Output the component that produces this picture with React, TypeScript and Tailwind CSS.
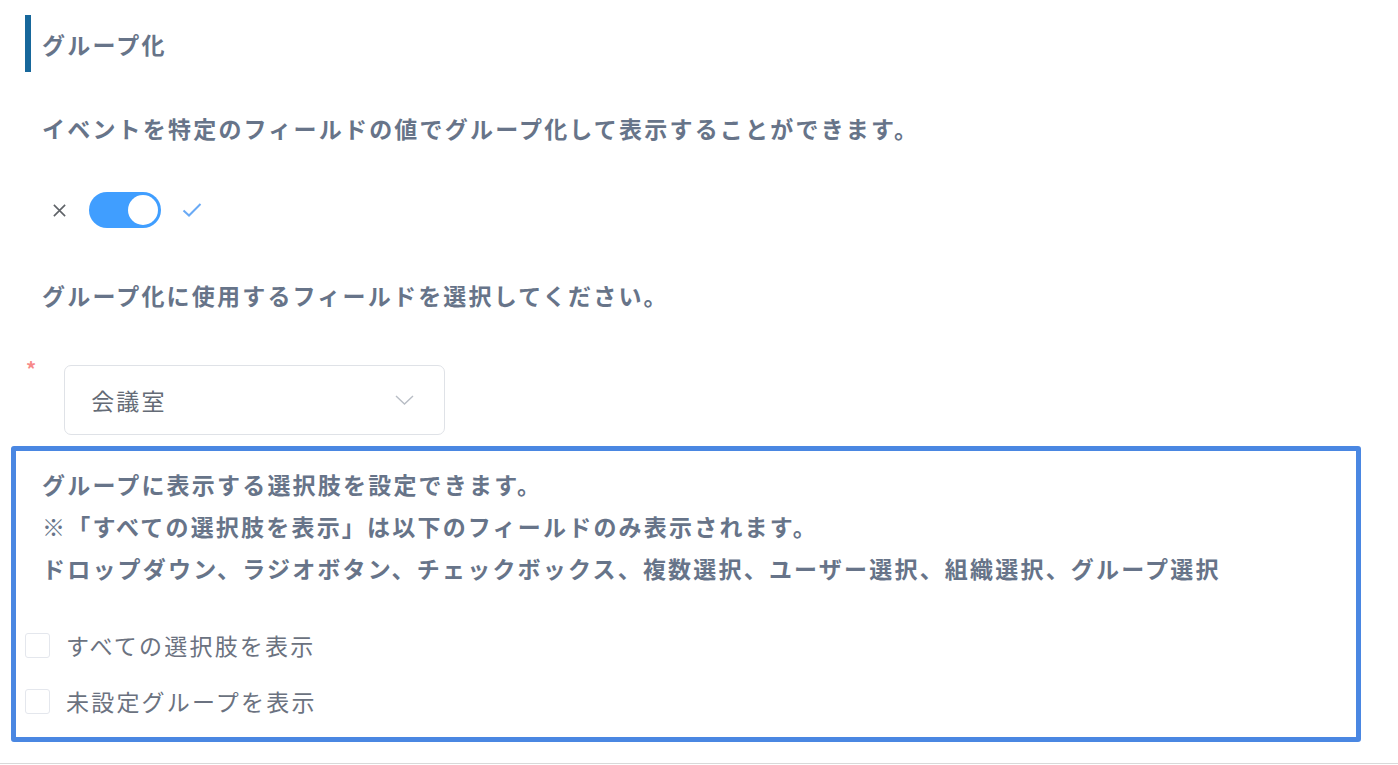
import { useState } from 'react';

const font = { fontFamily: '"Noto Sans CJK JP", "Noto Sans", sans-serif' };

function Toggle({ on, onChange }: { on: boolean; onChange: (v: boolean) => void }) {
  return (
    <div className="flex items-center h-[36px]">
      <svg className="ml-[52px] w-[15px] h-[15px]" viewBox="0 0 16 16" fill="none" stroke="#5f6368" strokeWidth={1.7}>
        <path d="M2 2l12 12M14 2L2 14" />
      </svg>
      <button
        onClick={() => onChange(!on)}
        className={`ml-[22px] relative w-[72px] h-[36px] rounded-full ${on ? 'bg-[#409eff]' : 'bg-[#dcdfe6]'}`}
      >
        <span
          className={`absolute top-[3px] w-[30px] h-[30px] rounded-full bg-white ${on ? 'left-[39px]' : 'left-[3px]'}`}
        />
      </button>
      <svg className="ml-[21px] w-[20px] h-[16px]" viewBox="0 0 20 16" fill="none" stroke="#6aaaf5" strokeWidth={2}>
        <path d="M1.5 8.5l5.5 5L18.5 2" />
      </svg>
    </div>
  );
}

function Check({ label }: { label: string }) {
  const [checked, setChecked] = useState(false);
  return (
    <label className="flex items-center h-[56px] cursor-pointer">
      <span
        onClick={() => setChecked(!checked)}
        className={`w-[25px] h-[25px] rounded-[3px] border ${checked ? 'bg-[#409eff] border-[#409eff]' : 'bg-white border-[#e4e7ed]'}`}
      />
      <span className="ml-[16px] text-[23px] tracking-[2.2px] text-[#6b7280] leading-[30px]">{label}</span>
    </label>
  );
}

export default function App() {
  const [grouped, setGrouped] = useState(true);

  return (
    <div className="w-[1398px] h-[765px] bg-white overflow-hidden" style={font}>
      <div className="pt-[15px]">
        <div className="ml-[25px] h-[57px] border-l-[6px] border-[#17679b] flex items-center pl-[11px]">
          <h2 className="text-[23px] font-bold tracking-[2.2px] text-[#677489] leading-[30px]">グループ化</h2>
        </div>

        <p className="mt-[41px] ml-[42px] text-[23px] font-bold tracking-[2.2px] text-[#677489] leading-[30px]">
          イベントを特定のフィールドの値でグループ化して表示することができます。
        </p>

        <div className="mt-[49px]">
          <Toggle on={grouped} onChange={setGrouped} />
        </div>

        <p className="mt-[52px] ml-[42px] text-[23px] font-bold tracking-[2.2px] text-[#677489] leading-[30px]">
          グループ化に使用するフィールドを選択してください。
        </p>

        <div className="mt-[55px] flex items-start">
          <span className="ml-[26px] mt-[-6px] text-[#f78989] text-[20px] font-bold leading-[20px]">*</span>
          <div className="ml-[28px] w-[381px] h-[70px] rounded-[7px] border border-[#dfe2e7] flex items-center justify-between pl-[26px] pr-[30px]">
            <span className="text-[23px] tracking-[2.2px] text-[#646b76] leading-[30px]">会議室</span>
            <svg className="w-[19px] h-[10px]" viewBox="0 0 19 10" fill="none" stroke="#b8bdc5" strokeWidth={1.4}>
              <path d="M1 1l8.5 8L18 1" />
            </svg>
          </div>
        </div>

        <div className="mt-[11px] ml-[11px] w-[1350px] h-[296px] border-[5px] border-[#4a87e2] rounded-[3px] pt-[12px] pl-[9px]">
          <div className="pl-[17px] text-[23px] font-bold tracking-[2.2px] text-[#677489] leading-[42px]">
            <p>グループに表示する選択肢を設定できます。</p>
            <p>※「すべての選択肢を表示」は以下のフィールドのみ表示されます。</p>
            <p>ドロップダウン、ラジオボタン、チェックボックス、複数選択、ユーザー選択、組織選択、グループ選択</p>
          </div>
          <div className="mt-[28px]">
            <Check label="すべての選択肢を表示" />
            <Check label="未設定グループを表示" />
          </div>
        </div>

        <div className="mt-[21px] border-t border-[#d9d9d9]" />
      </div>
    </div>
  );
}
